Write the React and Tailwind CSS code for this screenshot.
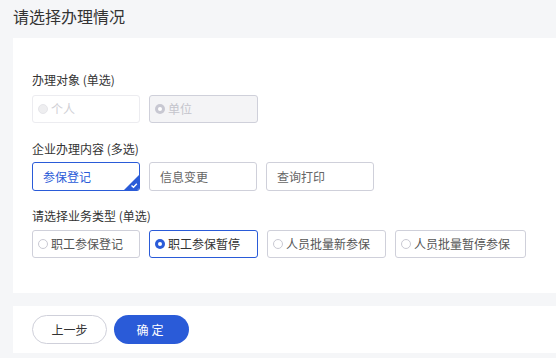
const font = { fontFamily: '"Noto Sans CJK SC", "Noto Sans", sans-serif' }

function Radio({ checked, disabled }) {
  if (disabled && checked) {
    return (
      <span className="w-[10px] h-[10px] rounded-full bg-[#c8c8d2] flex items-center justify-center shrink-0">
        <span className="w-[4px] h-[4px] rounded-full bg-white" />
      </span>
    )
  }
  if (disabled) {
    return <span className="w-[10px] h-[10px] rounded-full bg-[#eeeef0] border border-[#e6e6ea] shrink-0" />
  }
  if (checked) {
    return (
      <span className="w-[10px] h-[10px] rounded-full bg-[#2a5bd8] flex items-center justify-center shrink-0">
        <span className="w-[4px] h-[4px] rounded-full bg-white" />
      </span>
    )
  }
  return <span className="w-[10px] h-[10px] rounded-full border border-[#c9c9d3] bg-white shrink-0" />
}

function RadioBox({ label, width, checked, disabled }) {
  let cls = 'border-[#cfd0da] bg-white text-[#555]'
  if (disabled && checked) cls = 'border-[#cfd0da] bg-[#f4f4f6] text-[#c4c4cc]'
  else if (disabled) cls = 'border-[#ececf0] bg-white text-[#d0d0d6]'
  else if (checked) cls = 'border-[#2a5bd8] bg-white text-[#333]'
  return (
    <div
      className={`h-[28px] rounded-[3px] border flex items-center gap-[3px] pl-[5px] text-[12px] ${cls}`}
      style={{ width }}
    >
      <Radio checked={checked} disabled={disabled} />
      <span>{label}</span>
    </div>
  )
}

function CheckBox({ label, checked }) {
  return (
    <div
      className={`relative w-[108px] h-[29px] rounded-[3px] border flex items-center pl-[10px] text-[12px] overflow-hidden ${
        checked ? 'border-[#2a5bd8] text-[#2a5bd8]' : 'border-[#cfd0da] text-[#666]'
      }`}
    >
      {label}
      {checked && (
        <svg className="absolute right-0 bottom-0" width="15" height="15" viewBox="0 0 15 15">
          <path d="M15 0 L15 15 L0 15 Z" fill="#2a5bd8" />
          <path d="M7.5 10.5 L9.5 12.3 L12.8 8.8" stroke="#fff" strokeWidth="1.4" fill="none" />
        </svg>
      )}
    </div>
  )
}

export default function App() {
  return (
    <div className="w-[556px] h-[358px] bg-[#f5f6f8] overflow-hidden" style={font}>
      <div className="h-[38px] pl-[13px] pt-[4px] text-[16px] text-[#333]">请选择办理情况</div>

      <div className="ml-[13px] bg-white h-[255px] pl-[19px] pt-[33px]">
        <div className="text-[12px] text-[#333] leading-[18px]">办理对象 (单选)</div>
        <div className="flex gap-[9px] mt-[6px]">
          <RadioBox label="个人" width={108} disabled />
          <RadioBox label="单位" width={109} disabled checked />
        </div>

        <div className="text-[12px] text-[#333] leading-[18px] mt-[17px]">企业办理内容 (多选)</div>
        <div className="flex gap-[9px] mt-[4px]">
          <CheckBox label="参保登记" checked />
          <CheckBox label="信息变更" />
          <CheckBox label="查询打印" />
        </div>

        <div className="text-[12px] text-[#333] leading-[18px] mt-[16px]">请选择业务类型 (单选)</div>
        <div className="flex gap-[9px] mt-[5px]">
          <RadioBox label="职工参保登记" width={108} />
          <RadioBox label="职工参保暂停" width={109} checked />
          <RadioBox label="人员批量新参保" width={119} />
          <RadioBox label="人员批量暂停参保" width={131} />
        </div>
      </div>

      <div className="ml-[13px] mt-[13px] bg-white h-[47px] pl-[19px] flex items-center gap-[7px]">
        <button className="w-[75px] h-[29px] rounded-full border border-[#cfd0da] bg-white text-[12px] text-[#333]">
          上一步
        </button>
        <button className="w-[75px] h-[29px] rounded-full bg-[#2a5bd8] text-[12px] text-white tracking-[3px]">
          确定
        </button>
      </div>
    </div>
  )
}
